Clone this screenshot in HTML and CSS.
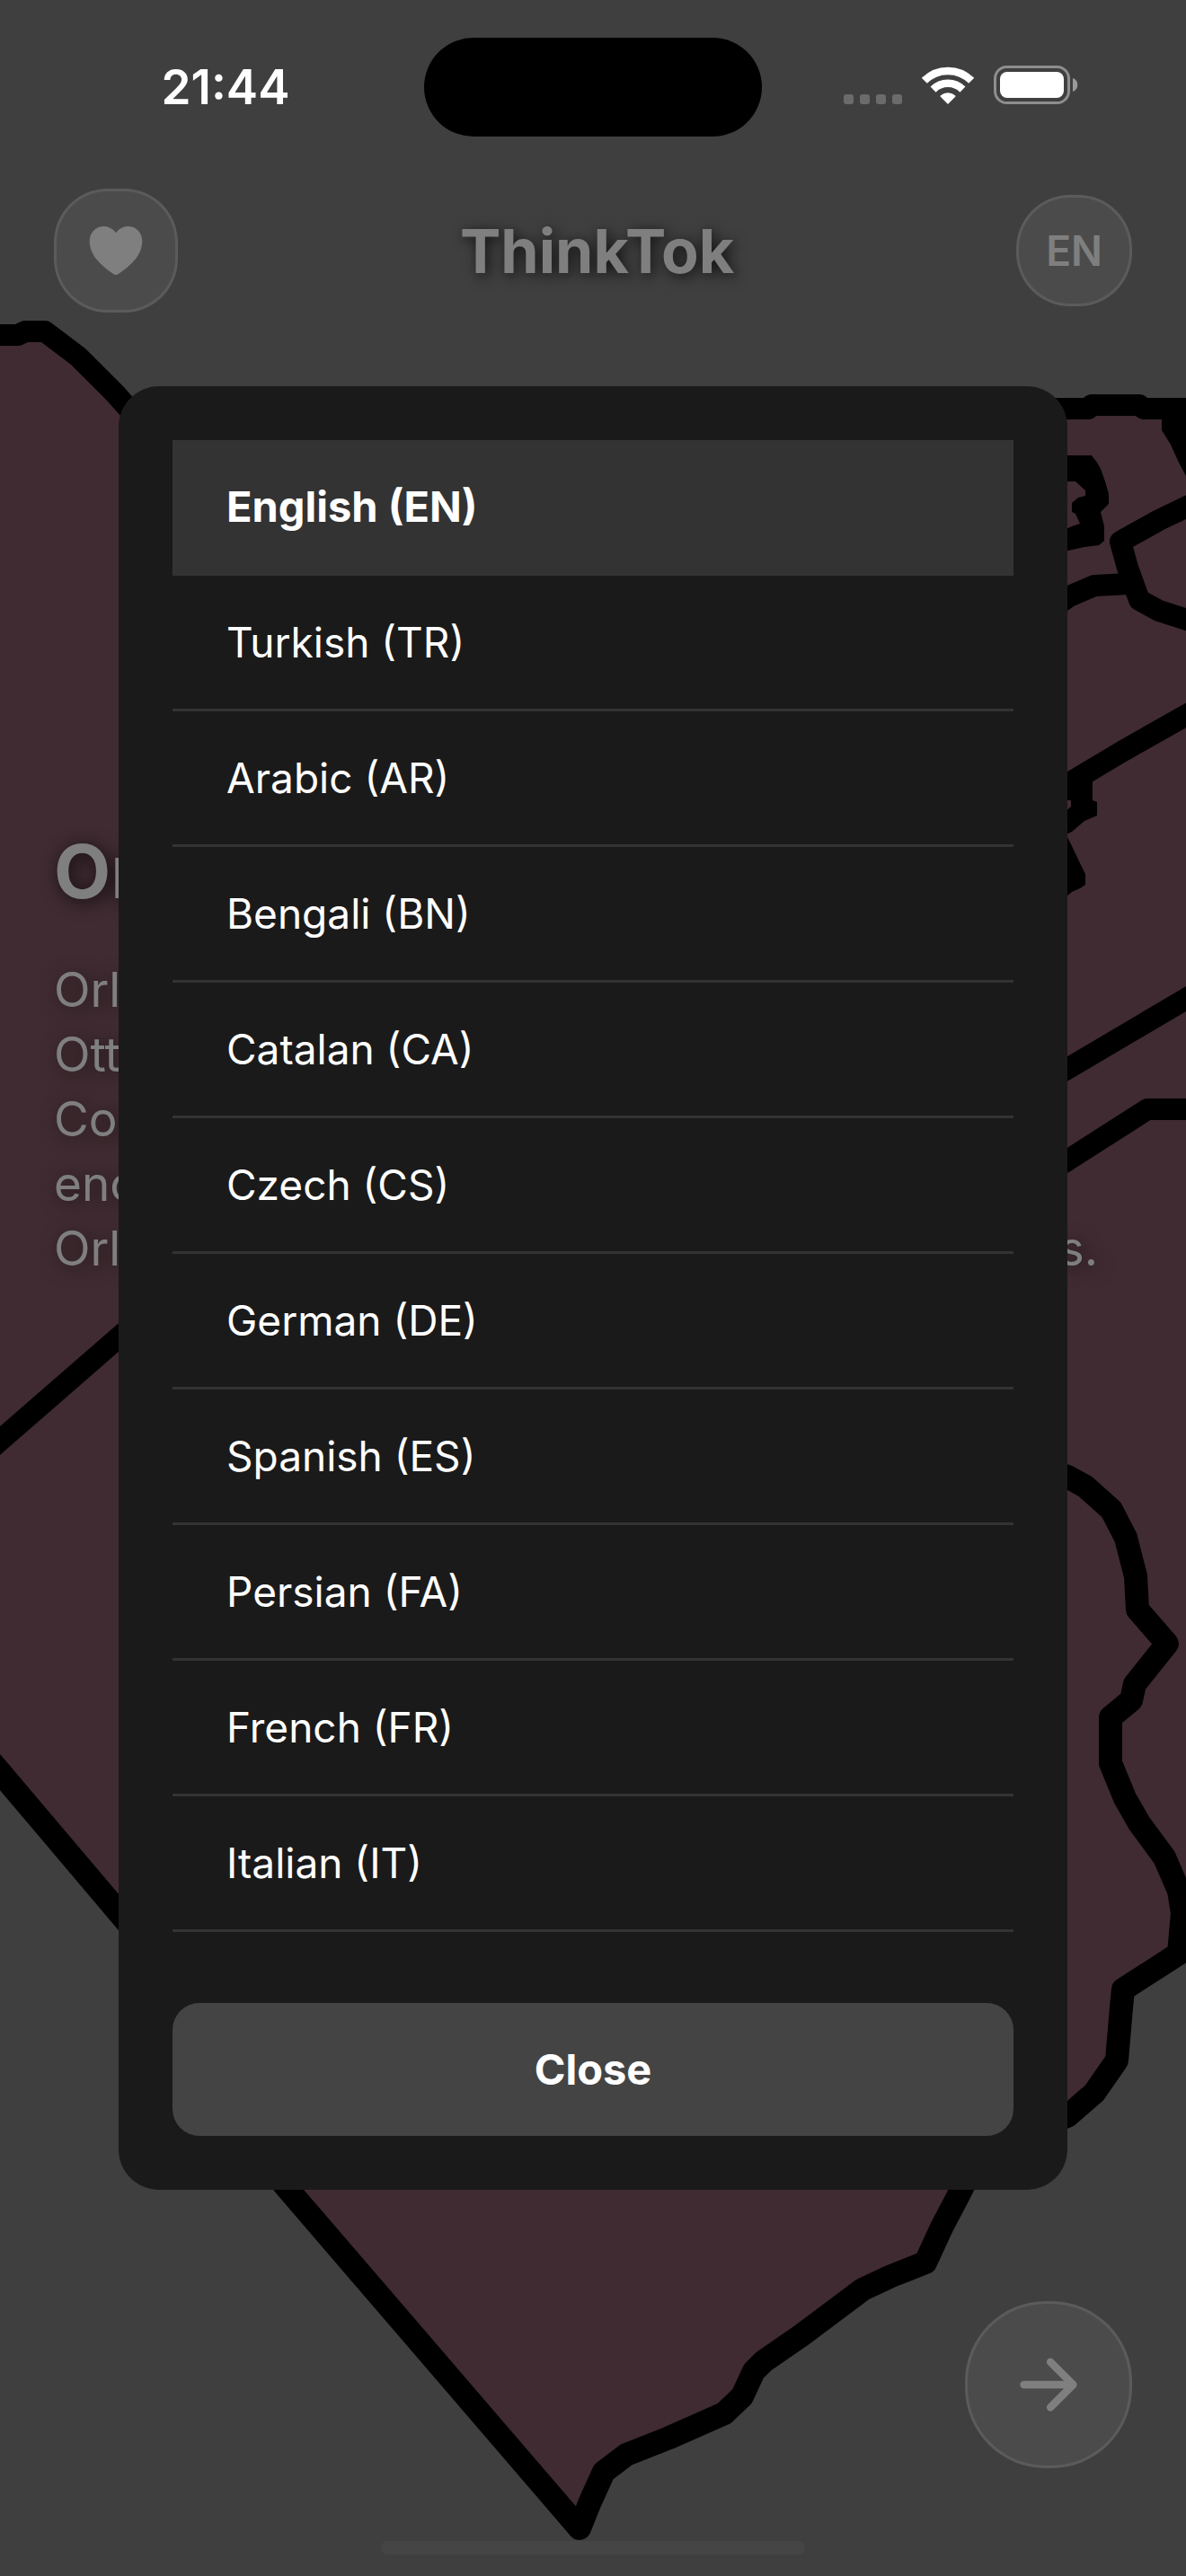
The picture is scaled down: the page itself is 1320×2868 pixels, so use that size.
FILE: index.html
```html
<!DOCTYPE html>
<html lang="en">
<head>
<meta charset="utf-8">
<meta name="viewport" content="width=device-width, initial-scale=1">
<title>ThinkTok</title>
<link rel="stylesheet" href="styles.css">
</head>
<body>
<div class="app">
  <svg class="map" viewBox="0 0 1320 2868" preserveAspectRatio="xMidYMid slice" aria-hidden="true">
    <path class="land" d="M-30 373L0 373L27 371L50 368L87 397L128 438L150 462L1188 455L1350 455V2130H1316L1312 2170L1250 2215L1248 2235L1243 2294L1218 2330L1188 2356L1140 2375L1100 2375L1070 2438L1048 2480L1030 2519L992 2534L960 2549L892 2600L850 2629L839 2640L826 2668L806 2687L745 2714L697 2733L672 2752L657 2785L645 2817L321 2438L150 2150L132 2129L0 1973L-30 1938Z"/>
    <g class="borders">
      <path d="M-30 373H20L28 369H50L87 397L128 438L160 474"/>
      <path d="M-30 1630L0 1604L132 1489L160 1465"/>
      <path class="coast" d="M-30 1938L0 1973L132 2129L160 2162L200 2260L300 2413L321 2438L645 2815L657 2785L672 2752L697 2733L745 2714L806 2687L826 2668L839 2640L850 2629L892 2600L960 2549L992 2534L1030 2519L1048 2480L1070 2438L1100 2375L1140 2375L1188 2356L1218 2330L1243 2294L1248 2235L1250 2215L1312 2175L1316 2130L1312 2105L1296 2068L1268 2030L1252 2002L1236 1963V1912L1259 1893L1263 1875L1299 1830L1266 1792L1264 1755L1253 1712L1237 1681L1208 1655L1188 1644L1150 1632"/>
      <path d="M1312 2175L1350 2157"/>
      <path d="M1150 455H1211L1215 451H1268L1273 455H1350"/>
      <path d="M1304 462L1316 490L1334 530"/>
      <path d="M1340 555L1290 579L1247 603L1255 632L1268 668L1290 680L1340 696"/>
      <path d="M1160 685L1190 664L1218 652L1256 650"/>
      <path d="M1160 887L1188 873L1250 836L1340 785"/>
      <path d="M1150 1211L1188 1190L1320 1112L1350 1094"/>
      <path d="M1150 1314L1188 1292L1277 1235H1350"/>
    </g>
    <path class="ink" fill-rule="evenodd" d="M1180 507H1215L1221 515L1225 522L1230 536L1234 550V561L1225 570L1229 586V602L1223 607L1207 609L1180 615ZM1180 536H1197L1208 546V552L1200 554L1193 560V570L1197 572L1202 583L1193 586L1180 592Z"/>
    <path class="ink" fill-rule="evenodd" d="M1180 865L1216 855V891L1221 893V908L1207 914L1193 926L1180 932ZM1184 891H1192V898L1184 905Z"/>
    <path class="ink" d="M1180 932H1188L1193 942L1202 961L1208 973V985L1202 989L1193 993L1180 1004ZM1293 450H1330V530H1320L1312 515L1303 495L1293 479Z"/>
  </svg>

  <div class="status">
    <div class="status-time">21:44</div>
    <div class="island"></div>
    <div class="status-icons">
      <svg class="dots" width="65" height="11" viewBox="0 0 65 11" aria-hidden="true"><rect width="11" height="11" rx="3"/><rect x="18" width="11" height="11" rx="3"/><rect x="36" width="11" height="11" rx="3"/><rect x="54" width="11" height="11" rx="3"/></svg>
      <svg width="58" height="42" viewBox="0 0 58 42" aria-hidden="true"><path d="M2.8 15.8A37 37 0 0 1 55.2 15.8M12.6 25.6A23.2 23.2 0 0 1 45.4 25.6" fill="none" stroke="#fff" stroke-width="8.6"/><path d="M29 42L20.8 33.8Q20 33 21 32.200A12.500 12.500 0 0 1 37 32.200Q38 33 37.200 33.800Z" fill="#fff"/></svg>
      <svg width="94" height="43" viewBox="0 0 94 43" aria-hidden="true"><rect x="1.500" y="1.500" width="82" height="40" rx="13" fill="none" stroke="#8e8e8e" stroke-width="3"/><rect x="7" y="7" width="71" height="29" rx="8" fill="#fff"/><path d="M88 14C95 16 95 27 88 29Z" fill="#9a9a9a"/></svg>
    </div>
  </div>

  <header class="header">
    <button class="glass" type="button" aria-label="Favorites">
      <svg width="72" height="72" viewBox="0 0 512 512" aria-hidden="true"><path fill="#fff" d="M256 448a32 32 0 01-18-5.570c-78.590-53.350-112.620-89.930-131.390-112.800-40-48.750-59.150-98.800-58.610-153C48.630 114.520 98.460 64 159.080 64c44.080 0 74.610 24.830 92.390 45.510a6 6 0 009.060 0C278.310 88.810 308.840 64 352.920 64c60.620 0 110.450 50.520 111.080 112.640.54 54.210-18.630 104.260-58.610 153-18.770 22.870-52.800 59.450-131.390 112.800A32 32 0 01256 448z"/></svg>
    </button>
    <h1 class="brand">ThinkTok</h1>
    <button class="glass lang" type="button">EN</button>
  </header>

  <main class="article">
    <h2 class="article-title">Or</h2>
    <p class="article-text">
      <span>Orl</span>
      <span>Ott</span>
      <span>Cou</span>
      <span>enc</span>
      <span class="last"><span>Orl</span><span>s.</span></span>
    </p>
  </main>

  <footer class="footer">
    <button class="glass next" type="button" aria-label="Next">
      <svg width="90" height="90" viewBox="0 0 512 512" fill="none" stroke="#fff" stroke-width="48" stroke-linecap="round" stroke-linejoin="round" aria-hidden="true"><path d="M268 112l144 144-144 144M392 256H100"/></svg>
    </button>
  </footer>

  <div class="overlay">
    <div class="dialog" role="dialog" aria-modal="true" aria-label="Language">
      <ul class="languages">
        <li><button class="language selected" type="button">English (EN)</button></li>
        <li><button class="language" type="button">Turkish (TR)</button></li>
        <li><button class="language" type="button">Arabic (AR)</button></li>
        <li><button class="language" type="button">Bengali (BN)</button></li>
        <li><button class="language" type="button">Catalan (CA)</button></li>
        <li><button class="language" type="button">Czech (CS)</button></li>
        <li><button class="language" type="button">German (DE)</button></li>
        <li><button class="language" type="button">Spanish (ES)</button></li>
        <li><button class="language" type="button">Persian (FA)</button></li>
        <li><button class="language" type="button">French (FR)</button></li>
        <li><button class="language" type="button">Italian (IT)</button></li>
      </ul>
      <button class="close" type="button">Close</button>
    </div>
    <div class="home-bar"></div>
  </div>
</div>
</body>
</html>
```

FILE: styles.css
```css
* {
  box-sizing: border-box;
}

body {
  margin: 0;
  background: #7e7e7e;
  color: #fff;
  font-family: Inter, "Liberation Sans", sans-serif;
}

h1,
h2,
p,
ul {
  margin: 0;
  padding: 0;
}

button {
  margin: 0;
  border: 0;
  color: inherit;
  font: inherit;
}

svg {
  display: block;
}

.app {
  position: relative;
  display: flex;
  flex-direction: column;
  min-height: 100vh;
  overflow: hidden;
  isolation: isolate;
}

/* Map behind the article */
.map {
  position: absolute;
  inset: 0;
  z-index: -1;
  width: 100%;
  height: 100%;
}

.land {
  fill: #7e5662;
}

.borders {
  fill: none;
  stroke: #000;
  stroke-width: 24px;
  stroke-linejoin: round;
}

.coast {
  stroke-width: 26px;
}

.ink {
  fill: #000;
}

/* Status bar stays above the dimmed page */
.status {
  position: relative;
  z-index: 2;
  display: grid;
  grid-template-columns: 1fr 376px 1fr;
  align-items: center;
  padding-top: 42px;
}

.status-time {
  padding-left: 30px;
  text-align: center;
  font-size: 53px;
  font-weight: 600;
  line-height: 60px;
}

.island {
  height: 110px;
  border-radius: 55px;
  background: #000;
}

.status-icons {
  display: flex;
  align-items: flex-end;
  justify-content: center;
  gap: 22px;
  padding: 0 30px 6px 0;
}

.dots {
  fill: #6b6b6b;
}

.header {
  display: flex;
  align-items: center;
  justify-content: space-between;
  padding: 58px 60px 0;
}

.brand {
  font-size: 68px;
  font-weight: 700;
  line-height: 86px;
  text-shadow: 3px 3px 15px rgba(0, 0, 0, 0.75);
}

.glass {
  padding: 30px;
  border: 3px solid rgba(255, 255, 255, 0.3);
  border-radius: 60px;
  background: rgba(255, 255, 255, 0.2);
}

.lang {
  font-size: 46px;
  font-weight: 600;
  line-height: 58px;
}

.article {
  display: flex;
  flex-direction: column;
  gap: 45px;
  padding: 573px 60px 0;
}

.article-title {
  font-size: 82px;
  font-weight: 700;
  line-height: 100px;
  text-shadow: 3px 3px 20px rgba(0, 0, 0, 0.75);
}

.article-text {
  display: flex;
  flex-direction: column;
  font-size: 53px;
  line-height: 72px;
  text-shadow: 3px 3px 20px rgba(0, 0, 0, 0.5);
}

.last {
  display: flex;
  justify-content: space-between;
  padding-right: 38px;
}

.footer {
  display: flex;
  justify-content: flex-end;
  margin-top: auto;
  padding: 60px 60px 120px;
}

.next {
  padding: 45px;
  border-radius: 90px;
}

/* Language picker */
.overlay {
  position: absolute;
  inset: 0;
  z-index: 1;
  display: grid;
  place-items: center;
  background: rgba(0, 0, 0, 0.5);
}

.dialog {
  display: flex;
  flex-direction: column;
  gap: 45px;
  width: 80%;
  height: 70%;
  padding: 60px;
  border-radius: 45px;
  background: #1a1a1a;
}

.languages {
  flex: 1;
  min-height: 0;
  overflow: hidden;
  list-style: none;
}

.language {
  display: block;
  width: 100%;
  padding: 45px 60px;
  border-bottom: 3px solid #333;
  background: transparent;
  text-align: left;
  font-size: 46px;
  line-height: 58px;
}

.selected {
  background: #333;
  font-size: 47px;
  font-weight: 700;
}

.close {
  padding: 45px;
  border-radius: 30px;
  background: #444;
  font-size: 47px;
  font-weight: 700;
  line-height: 58px;
}

.home-bar {
  position: absolute;
  bottom: 24px;
  left: 50%;
  width: 472px;
  height: 15px;
  margin-left: -236px;
  border-radius: 8px;
  background: #454545;
}
```
